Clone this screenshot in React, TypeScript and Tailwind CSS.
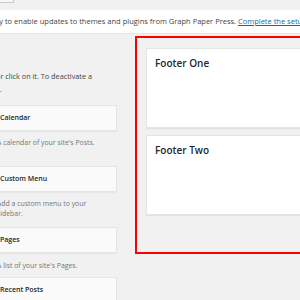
const widgets = [
  { title: 'Calendar', desc: ["A calendar of your site's Posts."], gapAfterCard: 'mt-[7px]', gapBefore: 'mt-[9px]' },
  { title: 'Custom Menu', desc: ['Add a custom menu to your', 'sidebar.'], gapAfterCard: 'mt-[7px]', gapBefore: 'mt-[18px]' },
  { title: 'Pages', desc: ["A list of your site's Pages."], gapAfterCard: 'mt-[8px]', gapBefore: 'mt-[8px]' },
  { title: 'Recent Posts', desc: [], gapAfterCard: 'mt-[8px]', gapBefore: 'mt-[6px]' },
];

const SidebarPanel = ({ title, className = '' }: { title: string; className?: string }) => (
  <div
    className={`h-[80px] bg-white border border-[#e5e5e5] shadow-[0_1px_1px_rgba(0,0,0,0.06)] pl-[8px] pt-[7px] text-[10px] leading-[14px] font-semibold text-[#23282d] ${className}`}
  >
    {title}
  </div>
);

export default function App() {
  return (
    <div className="w-[300px] h-[300px] overflow-hidden bg-[#f1f1f1] font-['Open_Sans',sans-serif]">
      {/* bottom of a button above the notice */}
      <div className="w-[14px] h-[3px] bg-[#f7f7f7] border-r border-b border-[#cccccc]" />

      {/* license notice */}
      <div className="mt-[7px] h-[23px] bg-white flex items-center whitespace-nowrap text-[7.5px] text-[#444] shadow-[0_1px_1px_rgba(0,0,0,0.04)]">
        <span className="w-[3px] shrink-0 flex justify-end">
          <span>Enter your license key</span>
        </span>
        <span>
          &nbsp;to enable updates to themes and plugins from Graph Paper Press.&nbsp;
          <a className="text-[#0073aa] underline">Complete the setup now</a>.
        </span>
      </div>

      <div className="flex items-start">
        {/* available widgets */}
        <div className="-ml-[10px] w-[127px] shrink-0 mt-[37px]">
          <div className="text-[7.3px] leading-[13px] text-[#444] whitespace-nowrap">
            <div className="w-[102px] flex justify-end">
              <span>To activate a widget drag it to a sidebar or click on it. To deactivate a</span>
            </div>
            <div className="w-[12px] flex justify-end">
              <span>widget and delete its settings, drag it back.</span>
            </div>
          </div>

          {widgets.map((w) => (
            <div key={w.title}>
              <div
                className={`${w.gapBefore} h-[26px] bg-[#fafafa] border border-[#e5e5e5] shadow-[0_1px_1px_rgba(0,0,0,0.04)] flex items-center pl-[9px] text-[7px] font-semibold text-[#23282d]`}
              >
                {w.title}
              </div>
              {w.desc.length > 0 && (
                <div className={`${w.gapAfterCard} pl-[7px] text-[6.9px] leading-[10px] text-[#72777c] whitespace-nowrap`}>
                  {w.desc.map((line) => (
                    <div key={line}>{line}</div>
                  ))}
                </div>
              )}
            </div>
          ))}
        </div>

        {/* highlighted footer sidebars */}
        <div className="ml-[18px] mt-[3px] w-[200px] shrink-0 border-2 border-[#ff0000] pt-[10px] pl-[9px] pb-[37px]">
          <SidebarPanel title="Footer One" />
          <SidebarPanel title="Footer Two" className="mt-[7px]" />
        </div>
      </div>
    </div>
  );
}
